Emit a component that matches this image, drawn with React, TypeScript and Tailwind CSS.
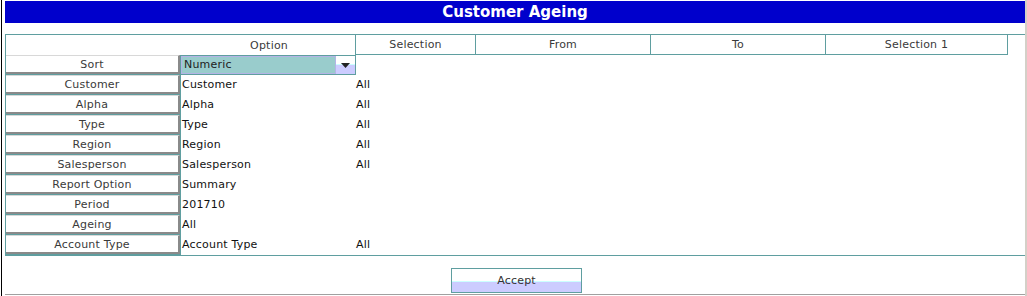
const rows: [string, string, string][] = [
  ["Customer", "Customer", "All"],
  ["Alpha", "Alpha", "All"],
  ["Type", "Type", "All"],
  ["Region", "Region", "All"],
  ["Salesperson", "Salesperson", "All"],
  ["Report Option", "Summary", ""],
  ["Period", "201710", ""],
  ["Ageing", "All", ""],
  ["Account Type", "Account Type", "All"],
];

const headers: [string, string][] = [
  ["Selection", "w-[120px]"],
  ["From", "w-[175px]"],
  ["To", "w-[175px]"],
  ["Selection 1", "w-[182px]"],
];

function LabelCell({ label }: { label: string }) {
  return (
    <div className="h-[20px] w-[174px] border-b border-[#5f9ea0]">
      <div className="flex h-[19px] items-center justify-center border-t border-r-2 border-b-2 border-t-[#d8d8d8] border-r-[#8a8a8a] border-b-[#8a8a8a] bg-white pt-[1px] leading-[14px] tracking-[0.2px] text-[#3a3a3a]">
        {label}
      </div>
    </div>
  );
}

function SortDropdown() {
  return (
    <div className="flex h-[20px] w-[176px] border border-[#5f9ea0]">
      <div className="flex flex-1 items-center border border-[#b4b4e6] bg-[#99cccc] pl-[2px] tracking-[0.2px] text-[#222]">
        Numeric
      </div>
      <div className="flex w-[19px] items-center justify-center bg-[linear-gradient(to_bottom,#ffffff_0%,#ffffff_42%,#ccffff_42%,#ccffff_50%,#ccccff_50%,#ccccff_100%)]">
        <svg width="9" height="5" viewBox="0 0 9 5">
          <path d="M0 0 H9 L4.5 5 Z" fill="#222" />
        </svg>
      </div>
    </div>
  );
}

export default function App() {
  return (
    <div className="flex h-[296px] w-[1027px] bg-white font-['DejaVu_Sans',sans-serif] text-[11px]">
      <div className="ml-[1px] w-[1px] bg-black" />
      <div className="ml-[3px] flex w-[1020px] flex-col">
        {/* Title bar */}
        <div className="mt-[1px] flex h-[22px] items-center justify-center bg-[#0000cc] text-[15px] font-bold text-white">
          Customer Ageing
        </div>

        {/* Parameter table */}
        <div className="mt-[11px] border-t border-l border-b border-[#5f9ea0]">
          <div className="flex h-[20px] tracking-[0.2px] text-[#3a3a3a]">
            <div className="flex w-[350px] items-center justify-end border-r border-[#5f9ea0] pt-[2px] pr-[67px]">
              Option
            </div>
            {headers.map(([h, w]) => (
              <div
                key={h}
                className={`${w} flex items-center justify-center border-r border-b border-[#5f9ea0] pt-[1px]`}
              >
                {h}
              </div>
            ))}
          </div>

          <div className="flex">
            <LabelCell label="Sort" />
            <SortDropdown />
          </div>
          {rows.map(([label, value, sel]) => (
            <div key={label} className="flex h-[20px] tracking-[0.2px]">
              <LabelCell label={label} />
              <div className="flex w-[176px] items-center border-l border-[#5f9ea0] pl-[1px] text-[#111]">
                {value}
              </div>
              <div className="flex items-center text-[#111]">{sel}</div>
            </div>
          ))}
        </div>

        {/* Accept */}
        <div className="mt-[12px] ml-[446px] flex h-[25px] w-[131px] items-center justify-center border border-[#5f9ea0] bg-[linear-gradient(to_bottom,#ffffff_0%,#ffffff_52%,#ccffff_52%,#ccffff_58%,#ccccff_58%,#ccccff_100%)] pt-[2px] tracking-[0.2px] text-[#333]">
          Accept
        </div>
        <div className="mt-[1px] h-[1px] bg-[#a0a0a0]" />
      </div>
      <div className="w-[2px] bg-[#d4d0c8]" />
    </div>
  );
}
